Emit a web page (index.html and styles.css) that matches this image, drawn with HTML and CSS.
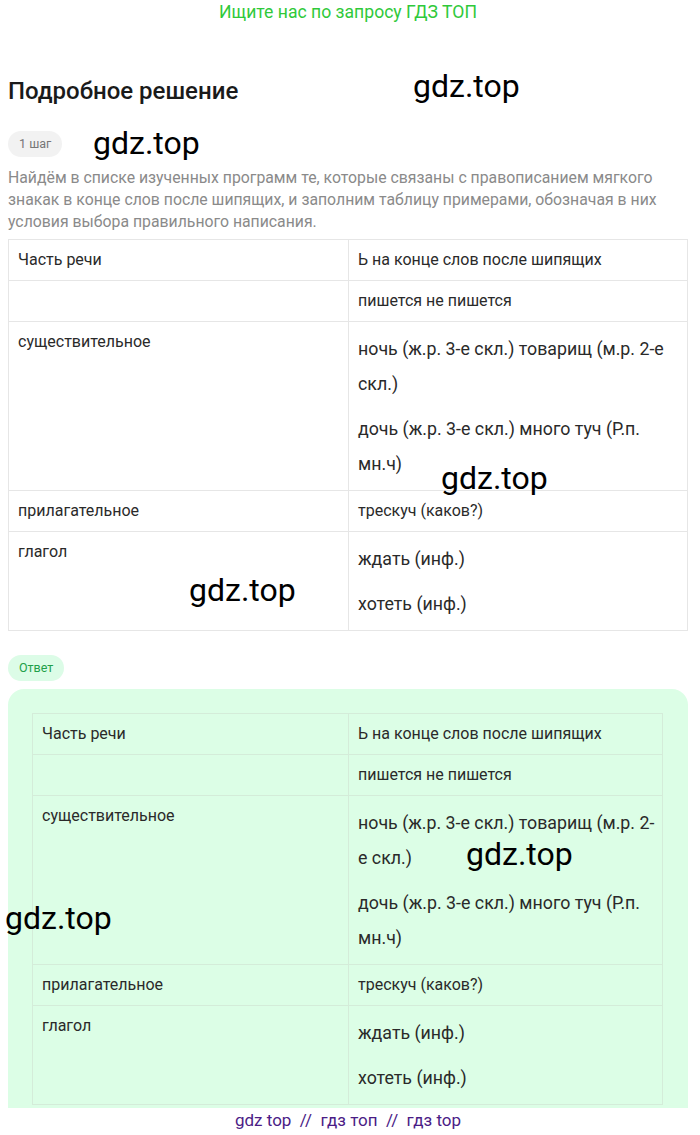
FILE: index.html
```html
<!DOCTYPE html>
<html lang="ru">
<head>
<meta charset="utf-8">
<link rel="stylesheet" href="styles.css">
</head>
<body>
<div class="page">
  <div class="promo">Ищите нас по запросу ГДЗ ТОП</div>
  <h2 class="title">Подробное решение</h2>
  <div class="pill step">1 шаг</div>
  <p class="lead">Найдём в списке изученных программ те, которые связаны с правописанием мягкого знакак в конце слов после шипящих, и заполним таблицу примерами, обозначая в них условия выбора правильного написания.</p>
  <table class="grid">
    <tr><td class="c1">Часть речи</td><td>Ь на конце слов после шипящих</td></tr>
    <tr><td class="c1"></td><td>пишется не пишется</td></tr>
    <tr><td class="c1">существительное</td><td><p>ночь (ж.р. 3-е скл.) товарищ (м.р. 2-е скл.)</p><p>дочь (ж.р. 3-е скл.) много туч (Р.п. мн.ч)</p></td></tr>
    <tr><td class="c1">прилагательное</td><td>трескуч (каков?)</td></tr>
    <tr><td class="c1">глагол</td><td><p>ждать (инф.)</p><p>хотеть (инф.)</p></td></tr>
  </table>
  <div class="pill answer">Ответ</div>
  <div class="answer-box">
    <table class="grid">
      <tr><td class="c1">Часть речи</td><td>Ь на конце слов после шипящих</td></tr>
      <tr><td class="c1"></td><td>пишется не пишется</td></tr>
      <tr><td class="c1">существительное</td><td><p>ночь (ж.р. 3-е скл.) товарищ (м.р. 2-е скл.)</p><p>дочь (ж.р. 3-е скл.) много туч (Р.п. мн.ч)</p></td></tr>
      <tr><td class="c1">прилагательное</td><td>трескуч (каков?)</td></tr>
      <tr><td class="c1">глагол</td><td><p>ждать (инф.)</p><p>хотеть (инф.)</p></td></tr>
    </table>
  </div>
  <div class="footer">gdz top &nbsp;//&nbsp; гдз топ &nbsp;//&nbsp; гдз top</div>

  <span class="wm wm1">gdz.top</span>
  <span class="wm wm2">gdz.top</span>
  <span class="wm wm3">gdz.top</span>
  <span class="wm wm4">gdz.top</span>
  <span class="wm wm5">gdz.top</span>
  <span class="wm wm6">gdz.top</span>
</div>
</body>
</html>
```

FILE: styles.css
```css
html, body {
  margin: 0;
  padding: 0;
  background: #fff;
}
body {
  font-family: Roboto, "Liberation Sans", sans-serif;
  color: #222;
}
.page {
  position: relative;
  width: 700px;
  min-height: 1135px;
  padding: 0 12px 0 8px;
  box-sizing: border-box;
}
.promo {
  text-align: center;
  color: #2fc93a;
  font-size: 17.6px;
  line-height: 24px;
}
.title {
  margin: 53px 0 0 0;
  font-size: 24px;
  line-height: 28px;
  font-weight: 500;
  color: #1a1a1a;
}
.pill {
  width: fit-content;
  height: 26px;
  font-size: 12.5px;
  line-height: 26px;
  padding: 0 11px;
  border-radius: 13px;
}
.step {
  margin-top: 26px;
  background: #f2f2f2;
  color: #777;
}
.lead {
  margin: 10px 0 6px 0;
  font-size: 15.8px;
  line-height: 22px;
  color: #8a8a8a;
}
.grid {
  width: 100%;
  border-collapse: collapse;
  font-size: 16px;
  color: #2a2a2a;
  table-layout: fixed;
}
.grid td {
  border: 1px solid #e6e6e6;
  padding: 9px 9px;
  line-height: 22px;
  vertical-align: top;
  text-align: left;
}
.grid td.c1 {
  width: 321px;
}
.grid td p {
  margin: 0 0 10px 0;
  line-height: 35px;
  font-size: 17.8px;
}
.grid td p:last-child {
  margin-bottom: 0;
}
.answer {
  margin-top: 24px;
  background: #dcfce7;
  color: #22a04a;
}
.answer-box {
  margin-top: 8px;
  background: #dcfee6;
  border-radius: 16px 16px 0 0;
  padding: 24px 25px 3px 24px;
}
.answer-box .grid td {
  border-color: #d4ecd9;
  padding-right: 3px;
}
.answer-box .grid td.c1 {
  width: 303px;
}
.footer {
  text-align: center;
  color: #4b1c86;
  font-size: 17px;
  line-height: 24px;
}
.wm {
  position: absolute;
  font-family: Roboto, "Liberation Sans", sans-serif;
  font-size: 32px;
  line-height: 36px;
  color: #000;
  pointer-events: none;
}
.wm1 { left: 413px; top: 68px; }
.wm2 { left: 93px; top: 125px; }
.wm3 { left: 441px; top: 460px; }
.wm4 { left: 189px; top: 572px; }
.wm5 { left: 466px; top: 836px; }
.wm6 { left: 5px; top: 900px; }
```
